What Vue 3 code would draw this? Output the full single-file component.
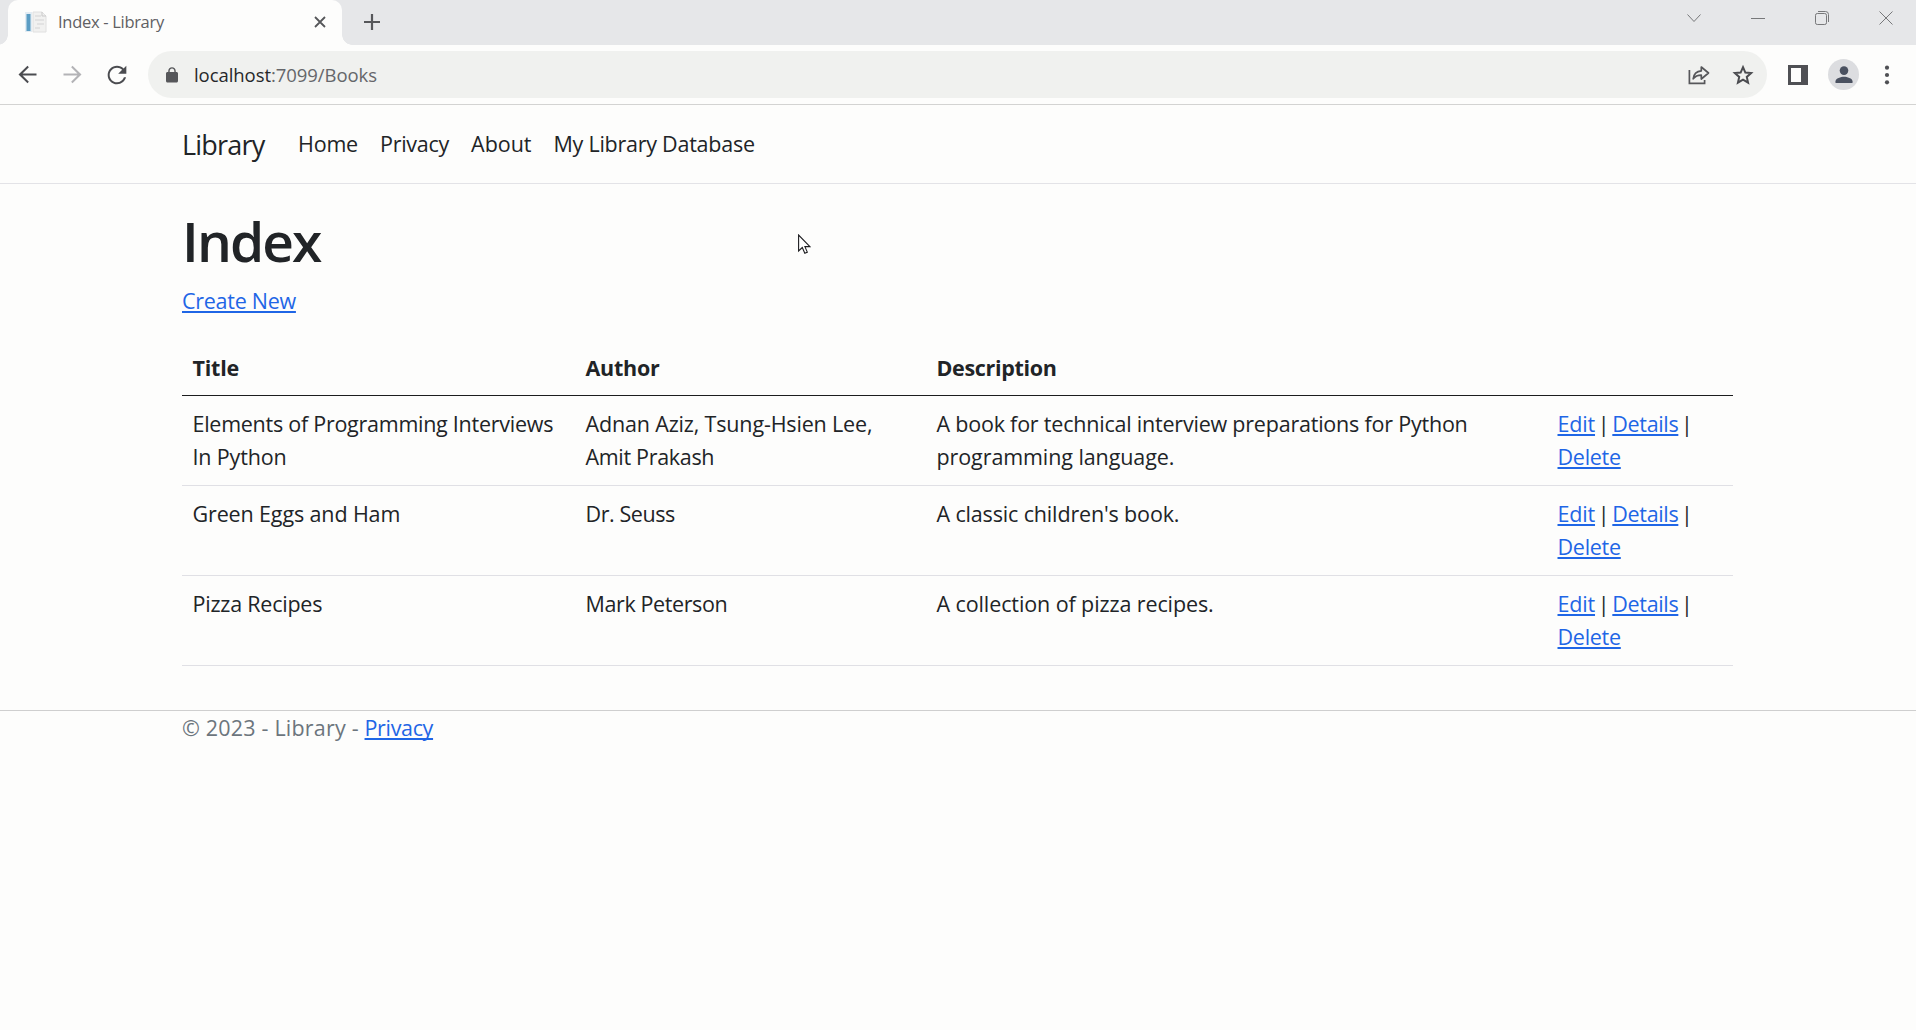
<script setup>
const nav = [
  { label: 'Home', track: -0.2 },
  { label: 'Privacy', track: -0.26 },
  { label: 'About', track: -0.02 },
  { label: 'My Library Database', track: -0.25 },
]

const columns = [
  { label: 'Title', track: -0.2 },
  { label: 'Author', track: -0.25 },
  { label: 'Description', track: -0.32 },
  { label: '', track: 0 },
]

// each cell is a list of text lines with their tracking in px
const books = [
  [
    [['Elements of Programming Interviews', -0.26], ['In Python', -0.16]],
    [['Adnan Aziz, Tsung-Hsien Lee,', -0.16], ['Amit Prakash', -0.32]],
    [['A book for technical interview preparations for Python', -0.21], ['programming language.', -0.09]],
  ],
  [
    [['Green Eggs and Ham', -0.13]],
    [['Dr. Seuss', -0.42]],
    [["A classic children's book.", -0.15]],
  ],
  [
    [['Pizza Recipes', -0.22]],
    [['Mark Peterson', -0.39]],
    [['A collection of pizza recipes.', -0.1]],
  ],
]
</script>

<template>
  <div class="window">
    <div class="tabstrip">
      <div class="tab">
        <svg class="favicon" width="22" height="22" viewBox="0 0 22 22">
          <rect x="0" y="1" width="7" height="20" fill="#e3ecf3" />
          <rect x="1.5" y="3" width="4" height="17" fill="#5b9dc4" />
          <path d="M8 1h9l4 4v16H8z" fill="#f1f1f0" stroke="#e0e0e0" stroke-width="1" />
          <path d="M10 5h6M10 9h9M12 13h7M10 17h5" stroke="#d3d3d3" stroke-width="1.2" />
          <path d="M17 1v4h4" fill="none" stroke="#c9c9c9" stroke-width="1" />
        </svg>
        <span class="tab-title">Index - Library</span>
        <svg class="tab-close" width="12" height="12" viewBox="0 0 12 12">
          <path d="M1 1l10 10M11 1L1 11" stroke="#56575a" stroke-width="1.800" />
        </svg>
      </div>
      <svg class="plus" width="18" height="18" viewBox="0 0 18 18">
        <path d="M9 1v16M1 9h16" stroke="#56575a" stroke-width="2.2" />
      </svg>
      <div class="controls">
        <svg width="16" height="16" viewBox="0 0 16 16"><path d="M1.5 4.500L8 11.500 14.500 4.500" /></svg>
        <svg width="16" height="16" viewBox="0 0 16 16"><path d="M1 8.500h14" /></svg>
        <svg width="16" height="16" viewBox="0 0 16 16">
          <rect x="1.500" y="3.500" width="11" height="11" rx="1.800" />
          <path d="M4 1.500h7.500a3 3 0 0 1 3 3V12" />
        </svg>
        <svg width="16" height="16" viewBox="0 0 16 16"><path d="M1.500 1.500l13 13M14.500 1.500l-13 13" /></svg>
      </div>
    </div>

    <div class="toolbar">
      <svg class="back" width="27" height="27" viewBox="0 0 24 24" fill="#4b4c50">
        <path d="M20 11.100H7.600l5.600-5.600L12 4.200l-8 7.800 8 7.800 1.200-1.300-5.600-5.600H20z" />
      </svg>
      <svg class="forward" width="27" height="27" viewBox="0 0 24 24" fill="#b3b3b6">
        <path d="M4 11.100h12.400l-5.600-5.600L12 4.200l8 7.800-8 7.800-1.200-1.300 5.600-5.600H4z" />
      </svg>
      <svg class="reload" width="28" height="28" viewBox="0 0 24 24" fill="#4b4c50">
        <path d="M17.650 6.350C16.200 4.900 14.210 4 12 4c-4.420 0-7.990 3.580-7.990 8s3.570 8 7.990 8c3.730 0 6.840-2.550 7.730-6h-1.780c-.82 2.530-3.180 4.300-5.950 4.300-3.480 0-6.300-2.820-6.300-6.300S8.520 5.700 12 5.700c1.730 0 3.300.7 4.440 1.860L13 11h7V4z" />
      </svg>
      <div class="omnibox">
        <svg class="lock" width="18" height="18" viewBox="0 0 24 24" fill="#56575a">
          <path d="M18 8h-1V6.500c0-2.760-2.240-5-5-5s-5 2.240-5 5V8H6c-1.100 0-2 .9-2 2v10c0 1.100.9 2 2 2h12c1.100 0 2-.9 2-2V10c0-1.100-.9-2-2-2zM8.900 8V6.500c0-1.710 1.390-3.100 3.100-3.100s3.100 1.390 3.100 3.100V8z" />
        </svg>
        <span class="url"><span class="host">localhost</span>:7099/Books</span>
        <svg class="share" width="22" height="20" viewBox="0 0 22 20" fill="none" stroke="#56575a" stroke-width="1.700">
          <path d="M1.400 5v13.400h15.200V15" />
          <path d="M5.200 13.800C5.800 8.800 8.600 6.300 13.300 5.900V2l7.200 6-7.200 6v-3.900c-3.600 0-6.100 1-8.100 3.700z" stroke-linejoin="round" />
        </svg>
        <svg class="star" width="22" height="22" viewBox="0 0 22 22" fill="none" stroke="#4b4c50" stroke-width="2">
          <path d="M11 3.200l2.350 5.350 5.800.55-4.380 3.850 1.300 5.700L11 15.650l-5.070 3 1.300-5.700L2.850 9.100l5.800-.55z" />
        </svg>
      </div>
      <svg class="panel" width="20" height="20" viewBox="0 0 20 20">
        <path fill="#4f5054" fill-rule="evenodd" d="M0 0h20v20H0zM3 3v14h10V3z" />
      </svg>
      <div class="avatar">
        <svg width="18" height="18" viewBox="0 0 18 18" fill="#4a5160">
          <circle cx="9" cy="4.600" r="4.300" />
          <path d="M.5 17v-1.700c0-3 5.500-4.600 8.500-4.600s8.500 1.600 8.500 4.600V17z" />
        </svg>
      </div>
      <svg class="dots" width="6" height="20" viewBox="0 0 6 20" fill="#4f5054">
        <circle cx="3" cy="2.700" r="2.100" /><circle cx="3" cy="10" r="2.100" /><circle cx="3" cy="17.300" r="2.100" />
      </svg>
    </div>

    <header class="navbar">
      <a class="brand">Library</a>
      <a v-for="n in nav" :key="n.label" class="nav-link" :style="{ letterSpacing: n.track + 'px' }">{{ n.label }}</a>
    </header>

    <main class="container">
      <h1>Index</h1>
      <p class="create"><a class="link">Create New</a></p>
      <table>
        <colgroup><col class="c1" /><col class="c2" /><col class="c3" /><col class="c4" /></colgroup>
        <thead>
          <tr>
            <th v-for="c in columns" :key="c.label" :style="{ letterSpacing: c.track + 'px' }">{{ c.label }}</th>
          </tr>
        </thead>
        <tbody>
          <tr v-for="(row, i) in books" :key="i">
            <td v-for="(cell, j) in row" :key="j">
              <div v-for="line in cell" :key="line[0]" class="line" :style="{ letterSpacing: line[1] + 'px' }">{{ line[0] }}</div>
            </td>
            <td class="actions">
              <div class="line"><a class="link edit">Edit</a><span class="sep">|</span><a class="link details">Details</a><span class="sep">|</span></div>
              <div class="line"><a class="link">Delete</a></div>
            </td>
          </tr>
        </tbody>
      </table>
    </main>

    <footer><span class="copy">© 2023 - Library - </span><a class="link details">Privacy</a></footer>

    <svg class="cursor" width="13" height="21" viewBox="0 0 13 21">
      <path d="M.6 1v16l3.700-3.500 2.500 5.700 2.500-1.100-2.400-5.500h5z" fill="#fff" stroke="#1d1d20" stroke-width="1.100" />
    </svg>
  </div>
</template>

<style>
body { background: #fdfdfc; }
</style>

<style scoped>
.window {
  position: relative;
  height: 1030px;
  overflow: hidden;
  background: #fdfdfc;
  color: #212427;
  font: 21.5px/33px "Open Sans", "Noto Sans", sans-serif;
}
svg { display: block; flex: none; }

.tabstrip { display: flex; align-items: flex-start; height: 45px; background: #e6e7e9; }
.tab {
  position: relative;
  display: flex;
  align-items: center;
  box-sizing: border-box;
  width: 334px;
  height: 45px;
  margin-left: 8px;
  padding: 0 16px 2px 17px;
  border-radius: 10px 10px 0 0;
  background: #fdfdfc;
}
.tab::before, .tab::after {
  content: "";
  position: absolute;
  bottom: 0;
  width: 10px;
  height: 10px;
}
.tab::before { left: -10px; background: radial-gradient(circle at 0 0, transparent 9.500px, #fdfdfc 10px); }
.tab::after { right: -10px; background: radial-gradient(circle at 100% 0, transparent 9.500px, #fdfdfc 10px); }
.tab-title { margin: -1px 0 0 11px; font-size: 16.500px; letter-spacing: -0.3px; color: #5f6063; }
.tab-close { margin-left: auto; }
.plus { margin: 13px 0 0 21px; }
.controls { display: flex; gap: 48px; margin: 10px 22px 0 auto; }
.controls svg { fill: none; stroke: #77787a; stroke-width: 1; }

.toolbar {
  display: flex;
  align-items: center;
  box-sizing: border-box;
  height: 60px;
  padding: 0 26px 0 14px;
  border-bottom: 1px solid #d3d3d2;
}
.forward { margin-left: 18px; }
.reload { margin-left: 17px; }
.omnibox {
  display: flex;
  align-items: center;
  box-sizing: border-box;
  width: 1619px;
  height: 47px;
  margin-left: 17px;
  padding: 0 13px 0 15px;
  border-radius: 24px;
  background: #f0f1ef;
}
.url { margin: 0 auto 0 13px; font-size: 18.500px; letter-spacing: -0.06px; color: #65666a; }
.host { color: #26272a; }
.share { margin-right: 22px; }
.panel { margin-left: 21px; }
.avatar {
  display: flex;
  align-items: center;
  justify-content: center;
  width: 31px;
  height: 31px;
  margin: 0 auto 0 20px;
  border-radius: 50%;
  background: #dcdde0;
}

.navbar {
  display: flex;
  align-items: center;
  box-sizing: border-box;
  height: 79px;
  padding: 0 182px;
  border-bottom: 1px solid #e3e3e7;
}
.brand { width: 105px; font-size: 27px; line-height: 41px; letter-spacing: -0.78px; }
.nav-link { margin-top: -1px; padding: 0 11px; }

.container { padding: 24px 183px 0 182px; }
h1 { margin: 0 0 10px; font-size: 55px; font-weight: 600; line-height: 66px; letter-spacing: -1.900px; }
.create { margin: 0 0 23px; }
.link {
  color: #1f66e6;
  letter-spacing: -0.27px;
  text-decoration: underline;
  text-decoration-thickness: 2px;
  text-underline-offset: 2px;
  text-decoration-skip-ink: none;
}
.edit { letter-spacing: -0.17px; }
.details { letter-spacing: -0.34px; }
.sep { display: inline-block; width: 17.300px; text-align: center; }

table { width: 1551px; border-collapse: separate; border-spacing: 0; table-layout: fixed; }
.c1 { width: 393px; }
.c2 { width: 351px; }
.c3 { width: 620px; }
.c4 { width: 187px; }
th { padding: 11px 11px 11px 10.500px; border-bottom: 1px solid #1c1d1e; font-weight: 700; text-align: left; }
td { padding: 11px 0 12px 10.500px; border-bottom: 1px solid #e0e0e5; vertical-align: top; }
.actions { padding-left: 11.500px; }
.line { height: 33px; white-space: nowrap; }

footer { margin-top: 44px; padding-left: 182px; border-top: 1px solid #cfcfcf; color: #6c757d; }
.copy { letter-spacing: 0.19px; white-space: pre; }

.cursor { position: absolute; left: 798px; top: 234px; }
</style>
